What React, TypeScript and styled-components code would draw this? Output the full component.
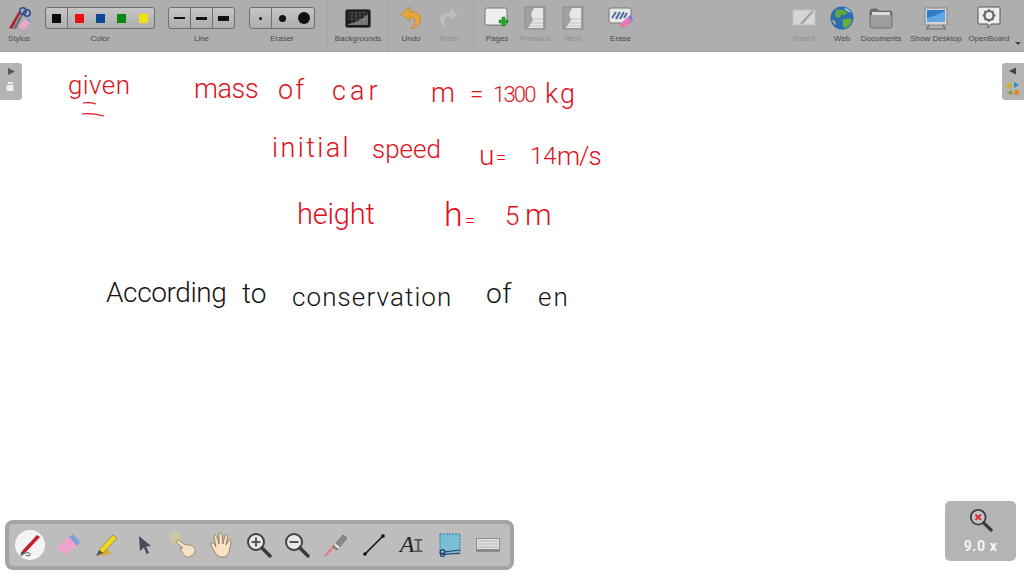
import React from "react";
import styled, { createGlobalStyle } from "styled-components";

const Global = createGlobalStyle`
  html, body { margin: 0; padding: 0; height: 100%; background: #fff; overflow: hidden; }
  #root { height: 100%; }
`;

const Page = styled.div`
  width: 1024px;
  height: 576px;
  display: flex;
  flex-direction: column;
  font-family: "Liberation Sans", Arial, sans-serif;
`;

const Toolbar = styled.header`
  height: 52px;
  flex: none;
  display: flex;
  background: #aeaeae;
  border-bottom: 1px solid #a2a2a2;
  box-sizing: border-box;
`;

const Tool = styled.div<{ $w: number; $ml?: number; $pl?: number; $sep?: boolean }>`
  width: ${p => p.$w}px;
  margin-left: ${p => p.$ml ?? 0}px;
  padding-left: ${p => p.$pl ?? 0}px;
  flex: none;
  display: flex;
  flex-direction: column;
  align-items: center;
  box-sizing: border-box;
  border-left: ${p => (p.$sep ? "1px solid #a6a6a6" : "none")};
`;

const IconSlot = styled.div`
  height: 33px;
  display: flex;
  align-items: center;
  justify-content: center;
  padding-top: 3px;
  box-sizing: border-box;
`;

const Label = styled.span<{ $off?: boolean }>`
  font-size: 8px;
  line-height: 12px;
  color: ${p => (p.$off ? "#8f8f8f" : "#4a4a4a")};
  white-space: nowrap;
`;

const Segments = styled.div`
  height: 22px;
  margin-top: 7px;
  margin-bottom: 4px;
  width: 100%;
  display: flex;
  box-sizing: border-box;
  border: 1px solid #707070;
  border-radius: 3px;
  background: linear-gradient(#c6c6c6, #adadad);
  overflow: hidden;
`;

const Cell = styled.div<{ $sep?: boolean }>`
  flex: 1;
  display: flex;
  align-items: center;
  justify-content: center;
  border-right: ${p => (p.$sep ? "1px solid #707070" : "none")};
`;

const Swatch = styled.div<{ $c: string }>`
  width: 9px;
  height: 9px;
  background: ${p => p.$c};
`;

const LineMark = styled.div<{ $h: number }>`
  width: 11px;
  height: ${p => p.$h}px;
  background: #111;
`;

const Dot = styled.div<{ $d: number }>`
  width: ${p => p.$d}px;
  height: ${p => p.$d}px;
  border-radius: 50%;
  background: #111;
`;

const Spacer = styled.div`
  flex: 1;
`;

const MoreArrow = styled.div`
  width: 0;
  height: 0;
  margin: 42px 3px 0 0;
  border-left: 3px solid transparent;
  border-right: 3px solid transparent;
  border-top: 3px solid #444;
`;

const Board = styled.main`
  flex: 1;
  position: relative;
  background: #fff;
  overflow: hidden;
`;

const SideTab = styled.div<{ $right?: boolean }>`
  position: absolute;
  top: 11px;
  ${p => (p.$right ? "right: 0;" : "left: 0;")}
  width: 22px;
  height: 37px;
  background: #b4b4b4;
  border-radius: ${p => (p.$right ? "3px 0 0 3px" : "0 3px 3px 0")};
  display: flex;
  justify-content: center;
  padding-top: 4px;
  box-sizing: border-box;
`;

const Ink = styled.span<{ $x: number; $y: number; $size: number; $ls: number; $c: string }>`
  position: absolute;
  left: ${p => p.$x}px;
  top: ${p => p.$y}px;
  font-family: Roboto, "Liberation Sans", sans-serif;
  font-weight: 300;
  font-size: ${p => p.$size}px;
  line-height: 1;
  letter-spacing: ${p => p.$ls}px;
  color: ${p => p.$c};
  white-space: nowrap;
`;

const Underline = styled.svg`
  position: absolute;
  left: 80px;
  top: 50px;
`;

const Dock = styled.div`
  position: absolute;
  left: 5px;
  top: 468px;
  width: 509px;
  height: 50px;
  box-sizing: border-box;
  background: #bdbdbd;
  border: 4px solid #a4a4a4;
  border-radius: 8px;
  display: flex;
  align-items: center;
  padding-left: 2px;
`;

const DockItem = styled.div`
  width: 38.2px;
  flex: none;
  display: flex;
  align-items: center;
  justify-content: center;
`;

const PenDisc = styled.div`
  width: 30px;
  height: 30px;
  border-radius: 50%;
  background: #f4f4f4;
  display: flex;
  align-items: center;
  justify-content: center;
`;

const TypeIcon = styled.span`
  font-family: "Liberation Serif", serif;
  font-style: italic;
  font-size: 24px;
  color: #222;
  line-height: 24px;
`;

const Caret = styled.span`
  font-family: "Liberation Mono", monospace;
  font-style: normal;
  font-size: 20px;
  font-weight: 300;
  color: #555;
  margin-left: -2px;
`;

const ZoomPanel = styled.div`
  position: absolute;
  left: 945px;
  top: 449px;
  width: 71px;
  height: 60px;
  background: #b4b4b4;
  border-radius: 5px;
  display: flex;
  flex-direction: column;
  align-items: center;
  padding-top: 7px;
  box-sizing: border-box;
`;

const ZoomValue = styled.span`
  font-family: Roboto, "Liberation Sans", sans-serif;
  font-weight: 700;
  font-size: 14px;
  line-height: 16px;
  margin-top: 6px;
  letter-spacing: 0.6px;
  color: #f4f4f4;
`;

const StylusIcon = () => (
  <svg width="26" height="26" viewBox="0 0 26 26">
    <path d="M3 23 L13 6 L15 7 L6 24 Z" fill="#a8242c" />
    <path d="M7 24 L16 7 L18 8 L10 24 Z" fill="#6c6f7a" />
    <circle cx="17" cy="6" r="3.2" fill="none" stroke="#2f4f8f" strokeWidth="1.5" />
    <circle cx="21" cy="8" r="3.2" fill="none" stroke="#2f4f8f" strokeWidth="1.5" />
    <path d="M12 21 L20 14 L24 18 L17 25 Z" fill="#efa6cb" />
    <path d="M20 14 L22 12 L25 16 L24 18 Z" fill="#7f9fd8" />
  </svg>
);

const BackgroundsIcon = () => (
  <svg width="26" height="19" viewBox="0 0 26 19">
    <rect x="0.5" y="0.5" width="25" height="18" rx="2" fill="#1c1c1c" stroke="#555" />
    <path d="M3 4h20M3 7h20M3 10h20M7 2v14M11 2v14M15 2v14M19 2v14" stroke="#5d5d5d" strokeWidth="0.7" />
    <path d="M3 15 Q14 13 23 5 V16 H3 Z" fill="#9a9a9a" opacity="0.7" />
  </svg>
);

const CurveArrow = ({ fill, flip }: { fill: string; flip?: boolean }) => (
  <svg width="22" height="24" viewBox="0 0 22 24" transform={flip ? "scale(-1 1)" : undefined}>
    <path d="M10 1 L1 8.5 L10 15 V11 C14 11 16 13 14.5 18 C14 20 12 22 11 23 C17 22 21 17 20.5 12 C20 7 15 5.5 10 6 Z" fill={fill} stroke={flip ? "#a0a0a0" : "#b27a1e"} strokeWidth="0.6" />
  </svg>
);

const PagesIcon = () => (
  <svg width="26" height="22" viewBox="0 0 26 22">
    <rect x="1" y="1" width="22" height="17" rx="2" fill="#efefef" stroke="#777" />
    <path d="M18 9h3v3h3v3h-3v3h-3v-3h-3v-3h3z" transform="translate(0 1)" fill="#23a832" stroke="#14761f" strokeWidth="0.5" />
  </svg>
);

const PageTurnIcon = () => (
  <svg width="22" height="24" viewBox="0 0 22 24">
    <rect x="1" y="1" width="20" height="22" fill="#a0a0a0" stroke="#8c8c8c" />
    <path d="M10 2 H19 V22 H4 L9 14 L7 8 Z" fill="#e6e6e6" />
    <path d="M8 13h11M7 17h12M5 20h14" stroke="#c2c2c2" />
  </svg>
);

const EraseIcon = () => (
  <svg width="26" height="22" viewBox="0 0 26 22">
    <rect x="1" y="1" width="22" height="15" rx="2" fill="#e8e8e8" stroke="#777" />
    <path d="M4 11 L8 5M8 12 L12 5M12 12 L16 5M16 11 L19 6" stroke="#4d6f9f" strokeWidth="2" />
    <path d="M11 18 L20 10 L24 14 L16 21 Z" fill="#e974b8" />
    <path d="M20 10 L22 8 L25 12 L24 14 Z" fill="#6a7fcf" />
  </svg>
);

const BoardIcon = () => (
  <svg width="24" height="20" viewBox="0 0 24 20">
    <rect x="1" y="2" width="22" height="15" fill="#d6d6d6" stroke="#c0c0c0" />
    <path d="M9 16 L21 3" stroke="#a3a3a3" strokeWidth="2.5" />
  </svg>
);

const GlobeIcon = () => (
  <svg width="24" height="24" viewBox="0 0 24 24">
    <circle cx="12" cy="12" r="11.5" fill="#2a6db5" />
    <path d="M6 4 C10 2 13 5 16 4 C19 7 15 10 13 9 C10 8 11 12 8 12 C5 12 4 8 6 4 Z" fill="#5ea644" />
    <path d="M12 14 C16 12 21 12 22 14 C21 19 17 22 14 22 C12 19 14 17 12 14 Z" fill="#68ad3f" />
    <path d="M2 14 C4 14 6 16 6 19 C4 18 3 16 2 14 Z" fill="#d4c45e" />
    <path d="M14 2 C17 2 20 4 21 7 C18 6 16 4 14 2 Z" fill="#a6d3ef" />
  </svg>
);

const FolderIcon = () => (
  <svg width="24" height="22" viewBox="0 0 24 22">
    <path d="M1 4 Q1 2 3 2 H8 L10 4 H21 Q23 4 23 6 V19 Q23 21 21 21 H3 Q1 21 1 19 Z" fill="#6f6f6f" stroke="#555" strokeWidth="0.6" />
    <rect x="3" y="5" width="18" height="5" fill="#dcdcdc" />
    <rect x="1.5" y="8" width="21" height="12.5" rx="1" fill="#9e9e9e" />
  </svg>
);

const MonitorIcon = () => (
  <svg width="24" height="23" viewBox="0 0 24 23">
    <rect x="1" y="1" width="22" height="17" fill="#d4d4d4" stroke="#888" />
    <rect x="3" y="3" width="18" height="12" fill="#2f7ccc" />
    <path d="M3 11 Q12 9 21 4 V15 H3 Z" fill="#5fa6e4" />
    <path d="M5 18 L3 22 H21 L19 18" fill="none" stroke="#666" strokeWidth="1.2" />
  </svg>
);

const GearBubbleIcon = () => (
  <svg width="24" height="24" viewBox="0 0 24 24">
    <path d="M2 1 H22 Q23 1 23 2 V17 Q23 18 22 18 H14 L11 22 V18 H2 Q1 18 1 17 V2 Q1 1 2 1 Z" fill="#ececec" stroke="#555" />
    <circle cx="12" cy="9.5" r="4.5" fill="none" stroke="#666" strokeWidth="2.2" />
    <path d="M12 3v2M12 14v2M5.5 9.5h2M16.5 9.5h2M7.5 5l1.4 1.4M15 12.6l1.5 1.4M16.5 5l-1.5 1.4M9 12.6L7.5 14" stroke="#666" strokeWidth="1.6" />
  </svg>
);

const PenIcon = () => (
  <svg width="26" height="26" viewBox="0 0 26 26">
    <path d="M5 19 L20 3 L23 5 L8 21 Z" fill="#c81e2a" />
    <path d="M5 19 L8 21 L3 23 Z" fill="#444" />
    <path d="M4 24 C8 20 12 20 13 22 C14 24 10 24 9 23" fill="none" stroke="#777" strokeWidth="1.2" />
  </svg>
);

const EraserIcon = () => (
  <svg width="26" height="24" viewBox="0 0 26 24">
    <path d="M2 14 L14 4 L22 13 L10 22 Z" fill="#f0a4cd" />
    <path d="M14 4 L18 1 L25 9 L22 13 Z" fill="#7e9fdb" />
  </svg>
);

const HighlighterIcon = () => (
  <svg width="26" height="26" viewBox="0 0 26 26">
    <path d="M5 24 L18 22 L16 18 L8 19 Z" fill="#d9a93c" />
    <path d="M6 18 L20 3 L24 6 L10 21 Z" fill="#f4d81e" stroke="#6b5e12" strokeWidth="0.5" />
    <path d="M6 18 L10 21 L3 24 Z" fill="#555" />
  </svg>
);

const CursorIcon = () => (
  <svg width="14" height="20" viewBox="0 0 14 20">
    <path d="M1 1 L13 11 L8 11.5 L11 18 L8.5 19 L6 12.5 L2 16 Z" fill="#454b58" />
  </svg>
);

const PointHandIcon = () => (
  <svg width="28" height="26" viewBox="0 0 28 26">
    <path d="M2 1h9v9H2z M2 4h9M2 7h9M5 1v9M8 1v9" fill="none" stroke="#dfd77c" strokeWidth="0.8" />
    <path d="M9 8 L16 13 C20 12 25 14 26 17 C27 21 23 25 19 25 C15 25 14 21 12 18 L11 16 L14 16 L7 10 Q7 8 9 8 Z" fill="#f8e2c6" stroke="#8c6f50" strokeWidth="0.7" />
  </svg>
);

const OpenHandIcon = () => (
  <svg width="24" height="26" viewBox="0 0 24 26">
    <path d="M7 22 C4 17 1 12 2 11 C4 10 6 13 7 15 L5 5 C5 3 7 3 8 5 L10 12 L10 2 C10 0.5 12 0.5 13 2 L14 12 L16 3 C17 2 19 3 18.5 5 L17 13 L20 8 C21.5 7 23 8 22 10 C21 14 21 20 18 24 C14 26 9 25 7 22 Z" fill="#f8e2c6" stroke="#8c6f50" strokeWidth="0.8" />
  </svg>
);

const MagnifierIcon = ({ mark, size = 26 }: { mark: "plus" | "minus" | "reset"; size?: number }) => (
  <svg width={size} height={size} viewBox="0 0 26 26">
    <circle cx="10" cy="10" r="8" fill={mark === "reset" ? "#c6c6c6" : "#e8e8e8"} stroke="#39414a" strokeWidth="2" />
    <path d="M16 16 L24 24" stroke="#3a3a3a" strokeWidth="3.4" strokeLinecap="round" />
    {mark === "reset" && <path d="M7 7l6 6M13 7l-6 6" stroke="#d8343f" strokeWidth="2.4" />}
    {mark !== "reset" && <path d="M5.5 10h9" stroke="#555" strokeWidth="2" />}
    {mark === "plus" && <path d="M10 5.5v9" stroke="#555" strokeWidth="2" />}
  </svg>
);

const LaserIcon = () => (
  <svg width="26" height="26" viewBox="0 0 26 26">
    <path d="M2 24 L11 14" stroke="#e38080" strokeWidth="2.4" />
    <path d="M10 15 L20 3 L24 6 L14 18 Z" fill="#8b8b8b" stroke="#555" strokeWidth="0.6" />
    <path d="M12 12.5 L16 16" stroke="#eee" strokeWidth="2" />
  </svg>
);

const LineToolIcon = () => (
  <svg width="24" height="24" viewBox="0 0 24 24">
    <path d="M3 21 L21 3" stroke="#111" strokeWidth="1.6" />
    <circle cx="3" cy="21" r="1.8" fill="#111" />
    <circle cx="21" cy="3" r="1.8" fill="#111" />
  </svg>
);

const CaptureIcon = () => (
  <svg width="22" height="24" viewBox="0 0 22 24">
    <rect x="1" y="1" width="20" height="20" fill="#79bfd4" stroke="#3f74ae" strokeDasharray="2 1" />
    <circle cx="3.5" cy="19" r="2.4" fill="none" stroke="#23416f" strokeWidth="1.3" />
    <circle cx="3.5" cy="22" r="1.8" fill="none" stroke="#23416f" strokeWidth="1.3" />
    <path d="M5 19 L21 17 M5 21.5 L21 20" stroke="#33405a" strokeWidth="1.2" />
  </svg>
);

const KeyboardIcon = () => (
  <svg width="24" height="14" viewBox="0 0 24 14">
    <rect x="0.5" y="0.5" width="23" height="13" fill="#e2e2e2" stroke="#8f8f8f" />
    <path d="M2 3h20M2 6h20M2 9h20" stroke="#a2a2a2" strokeWidth="1.2" strokeDasharray="1.6 0.6" />
    <rect x="1" y="11" width="22" height="2.5" fill="#8a8a8a" />
  </svg>
);

const TabArrows = ({ right }: { right?: boolean }) =>
  right ? (
    <svg width="14" height="28" viewBox="0 0 14 28">
      <path d="M3 4 L10 0.5 V7.5 Z" fill="#444" />
      <rect x="0.5" y="16" width="5" height="5" rx="1" fill="#cdb23a" />
      <path d="M8 15 V21 L13 18 Z" fill="#2d8fc7" />
      <path d="M6 23 L1 25.5 L6 28 Z" fill="#7f9c3c" />
      <rect x="8" y="23" width="5" height="5" rx="2" fill="#dd8a2a" />
    </svg>
  ) : (
    <svg width="10" height="28" viewBox="0 0 10 28">
      <path d="M2 1 L9 4.5 L2 8 Z" fill="#555" />
      <rect x="2" y="15" width="5" height="2" fill="#eee" />
      <rect x="0.5" y="18" width="7" height="6" fill="#eee" />
    </svg>
  );

const RED = "#e0101c";
const BLACK = "#141414";

const inkWords = [
  { t: "given", x: 68, y: 20, size: 26, ls: 0.4, c: RED },
  { t: "mass", x: 194, y: 24, size: 27, ls: -0.4, c: RED },
  { t: "of", x: 278, y: 25, size: 27, ls: 2, c: RED },
  { t: "car", x: 332, y: 26, size: 27, ls: 4, c: RED },
  { t: "m", x: 431, y: 28, size: 27, ls: 0, c: RED },
  { t: "=", x: 470, y: 30, size: 24, ls: 0, c: RED },
  { t: "1300", x: 493, y: 32, size: 22, ls: -1.8, c: RED },
  { t: "kg", x: 545, y: 29, size: 27, ls: 2, c: RED },
  { t: "initial", x: 272, y: 83, size: 27, ls: 2.4, c: RED },
  { t: "speed", x: 372, y: 84, size: 26, ls: 0, c: RED },
  { t: "u", x: 479, y: 90, size: 28, ls: 0, c: RED },
  { t: "=", x: 496, y: 97, size: 18, ls: 0, c: RED },
  { t: "14", x: 530, y: 92, size: 24, ls: 0, c: RED },
  { t: "m/s", x: 557, y: 91, size: 26, ls: -1, c: RED },
  { t: "height", x: 297, y: 148, size: 29, ls: -0.2, c: RED },
  { t: "h", x: 444, y: 145, size: 34, ls: 0, c: RED },
  { t: "=", x: 465, y: 160, size: 18, ls: 0, c: RED },
  { t: "5", x: 505, y: 151, size: 26, ls: 0, c: RED },
  { t: "m", x: 525, y: 148, size: 30, ls: 0, c: RED },
  { t: "According", x: 106, y: 227, size: 28, ls: -0.4, c: BLACK },
  { t: "to", x: 242, y: 228, size: 28, ls: 0, c: BLACK },
  { t: "conservation", x: 292, y: 232, size: 26, ls: 1.1, c: BLACK },
  { t: "of", x: 486, y: 228, size: 28, ls: 0.6, c: BLACK },
  { t: "en", x: 538, y: 232, size: 26, ls: 2, c: BLACK },
];

const colors = ["#0a0a0a", "#ee0f14", "#0a4a94", "#0a8a14", "#f2e20a"];

const dockIcons = [
  <PenDisc key="pen"><PenIcon /></PenDisc>,
  <EraserIcon key="eraser" />,
  <HighlighterIcon key="marker" />,
  <CursorIcon key="cursor" />,
  <PointHandIcon key="point" />,
  <OpenHandIcon key="hand" />,
  <MagnifierIcon key="in" mark="plus" />,
  <MagnifierIcon key="out" mark="minus" />,
  <LaserIcon key="laser" />,
  <LineToolIcon key="line" />,
  <TypeIcon key="text">A<Caret>I</Caret></TypeIcon>,
  <CaptureIcon key="capture" />,
  <KeyboardIcon key="keyboard" />,
];

export default function App() {
  return (
    <Page>
      <Global />
      <Toolbar>
        <Tool $w={38}>
          <IconSlot><StylusIcon /></IconSlot>
          <Label>Stylus</Label>
        </Tool>
        <Tool $w={110} $ml={7}>
          <Segments>
            {colors.map((c, i) => (
              <Cell key={c} $sep={i === 0}><Swatch $c={c} /></Cell>
            ))}
          </Segments>
          <Label>Color</Label>
        </Tool>
        <Tool $w={67} $ml={13}>
          <Segments>
            {[2, 3, 5].map((h, i) => (
              <Cell key={h} $sep={i < 2}><LineMark $h={h} /></Cell>
            ))}
          </Segments>
          <Label>Line</Label>
        </Tool>
        <Tool $w={66} $ml={14}>
          <Segments>
            {[3, 7, 12].map((d, i) => (
              <Cell key={d} $sep={i === 0}><Dot $d={d} /></Cell>
            ))}
          </Segments>
          <Label>Eraser</Label>
        </Tool>
        <Tool $w={61} $ml={12} $sep>
          <IconSlot><BackgroundsIcon /></IconSlot>
          <Label>Backgrounds</Label>
        </Tool>
        <Tool $w={42} $pl={3} $sep>
          <IconSlot><CurveArrow fill="#e8a63a" /></IconSlot>
          <Label>Undo</Label>
        </Tool>
        <Tool $w={38}>
          <IconSlot><CurveArrow fill="#bdbdbd" flip /></IconSlot>
          <Label $off>Redo</Label>
        </Tool>
        <Tool $w={43} $ml={5} $pl={4} $sep>
          <IconSlot><PagesIcon /></IconSlot>
          <Label>Pages</Label>
        </Tool>
        <Tool $w={38}>
          <IconSlot><PageTurnIcon /></IconSlot>
          <Label $off>Previous</Label>
        </Tool>
        <Tool $w={38}>
          <IconSlot><PageTurnIcon /></IconSlot>
          <Label $off>Next</Label>
        </Tool>
        <Tool $w={46} $ml={5} $sep>
          <IconSlot><EraseIcon /></IconSlot>
          <Label>Erase</Label>
        </Tool>
        <Spacer />
        <Tool $w={38}>
          <IconSlot><BoardIcon /></IconSlot>
          <Label $off>Board</Label>
        </Tool>
        <Tool $w={38}>
          <IconSlot><GlobeIcon /></IconSlot>
          <Label>Web</Label>
        </Tool>
        <Tool $w={40}>
          <IconSlot><FolderIcon /></IconSlot>
          <Label>Documents</Label>
        </Tool>
        <Tool $w={54} $ml={8}>
          <IconSlot><MonitorIcon /></IconSlot>
          <Label>Show Desktop</Label>
        </Tool>
        <Tool $w={52}>
          <IconSlot><GearBubbleIcon /></IconSlot>
          <Label>OpenBoard</Label>
        </Tool>
        <MoreArrow />
      </Toolbar>
      <Board>
        <SideTab><TabArrows /></SideTab>
        <SideTab $right><TabArrows right /></SideTab>
        {inkWords.map(w => (
          <Ink key={`${w.t}-${w.x}`} $x={w.x} $y={w.y} $size={w.size} $ls={w.ls} $c={w.c}>{w.t}</Ink>
        ))}
        <Underline width="30" height="16" viewBox="0 0 30 16">
          <path d="M3 1 C9 0 13 1 16 2 M2 12 C9 11 16 12 24 14" fill="none" stroke={RED} strokeWidth="1.2" />
        </Underline>
        <Dock>
          {dockIcons.map(icon => (
            <DockItem key={icon.key}>{icon}</DockItem>
          ))}
        </Dock>
        <ZoomPanel>
          <MagnifierIcon mark="reset" size={24} />
          <ZoomValue>9.0 x</ZoomValue>
        </ZoomPanel>
      </Board>
    </Page>
  );
}
